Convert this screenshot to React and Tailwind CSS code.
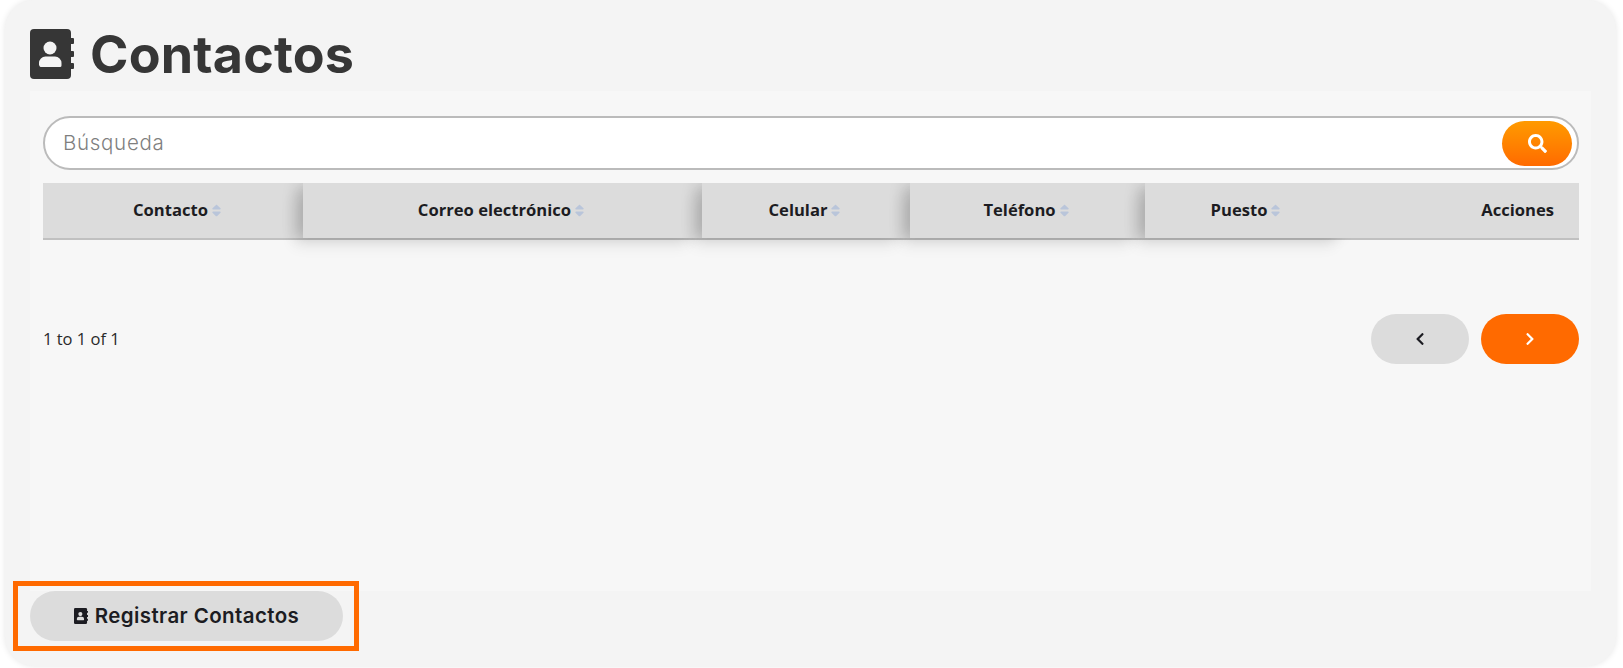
import React from "react";
import { FaChevronLeft, FaChevronRight, FaSearch, FaSort } from "react-icons/fa";

const poppins = "font-['Inter','Noto_Sans',sans-serif]";
const open = "font-['Open_Sans',sans-serif]";

function BookIcon({ className, cut }) {
  return (
    <svg viewBox="0 0 44 50" className={className} fill="currentColor" aria-hidden="true">
      <rect x="0" y="0" width="41" height="50" rx="4" />
      <rect x="40" y="9" width="4" height="6" rx="1" />
      <rect x="40" y="22" width="4" height="6" rx="1" />
      <rect x="40" y="34" width="4" height="6" rx="1" />
      <circle cx="20" cy="19" r="6.5" fill={cut} />
      <path d="M9 36.5v-2.5a6.5 6.5 0 0 1 6.5-6.5h9.5a6.5 6.5 0 0 1 6.5 6.5v2.5a1.5 1.5 0 0 1-1.5 1.5h-19a1.5 1.5 0 0 1-1.5-1.5z" fill={cut} />
    </svg>
  );
}

function Th({ label, className, shadow = true }) {
  return (
    <div className={`flex h-full items-center justify-center bg-[#dcdcdc] ${shadow ? "shadow-[-8px_0_14px_-2px_rgba(0,0,0,0.17),-12px_11px_14px_-3px_rgba(0,0,0,0.07)]" : ""} ${className}`}>
      <span className="text-[16.6px] font-bold text-[#1c1c22]">{label}</span>
      <FaSort className="ml-[1px] text-[15px] text-[#b9c5da]" />
    </div>
  );
}

export default function App() {
  return (
    <div className="h-[668px] w-full bg-white pl-[5px] pr-[7px] pb-[2px]">
      <div className="flex h-full flex-col rounded-[30px] bg-[#f4f4f4] px-[25px] pt-[29px] shadow-[0_0_6px_rgba(0,0,0,0.1)]">
        <div className="flex h-[62px] items-start gap-[16px]">
          <BookIcon className="h-[50px] w-[44px] text-[#363636]" cut="#f4f4f4" />
          <h1 className={`${poppins} text-[52px] leading-[52px] font-bold tracking-[0.2px] text-[#363636]`}>Contactos</h1>
        </div>

        <div className={`${open} h-[500px] bg-[#f7f7f7] pt-[25px] pl-[13px] pr-[12px]`}>
          <div className="flex h-[54px] items-center justify-between rounded-full border-2 border-[#bbbbbb] bg-white pl-[18px] pr-[5px]">
            <span className={`${poppins} text-[20.5px] font-light tracking-[0.7px] text-[#7f7f7f]`}>Búsqueda</span>
            <button className="flex h-[45px] w-[70px] items-center justify-center rounded-full bg-gradient-to-b from-[#ff9a00] to-[#ff6a00] text-white">
              <FaSearch className="text-[19px]" />
            </button>
          </div>

          <div className="mt-[13px] h-[80px] overflow-hidden">
            <div className="flex h-[57px] border-b-2 border-[#c0c0c0] bg-[#dcdcdc]">
              <Th label="Contacto" className="w-[260px] pl-[11px]" shadow={false} />
              <Th label="Correo electrónico" className="w-[399px]" />
              <Th label="Celular" className="w-[208px]" />
              <Th label="Teléfono" className="w-[235px]" />
              <Th label="Puesto" className="w-[204px]" />
              <div className="flex h-full flex-1 items-center justify-end bg-[#dcdcdc] pr-[25px] text-[16.6px] font-bold text-[#1c1c22]">Acciones</div>
            </div>
          </div>

          <div className="mt-[51px] flex h-[50px] items-center justify-between">
            <span className="text-[16.5px] text-[#2a2a2a]">1 to 1 of 1</span>
            <div className="flex gap-[12px]">
              <button className="flex h-[50px] w-[98px] items-center justify-center rounded-full bg-[#dcdcdc] text-[#1c1c22]">
                <FaChevronLeft className="text-[14px]" />
              </button>
              <button className="flex h-[50px] w-[98px] items-center justify-center rounded-full bg-[#ff6a00] text-white">
                <FaChevronRight className="text-[14px]" />
              </button>
            </div>
          </div>
        </div>

        <div className="relative h-[50px] w-[313px]">
          <div className="absolute -left-[17px] -right-[16px] -top-[10px] -bottom-[10px] border-[5px] border-[#ff6a00]"></div>
          <button className={`${poppins} flex h-full w-full items-center justify-center gap-[7px] rounded-full bg-[#dcdcdc] text-[20.5px] font-semibold tracking-[0.4px] text-[#1c1c22]`}>
            <BookIcon className="h-[16px] w-[14px]" cut="#dcdcdc" />
            Registrar Contactos
          </button>
        </div>
      </div>
    </div>
  );
}
